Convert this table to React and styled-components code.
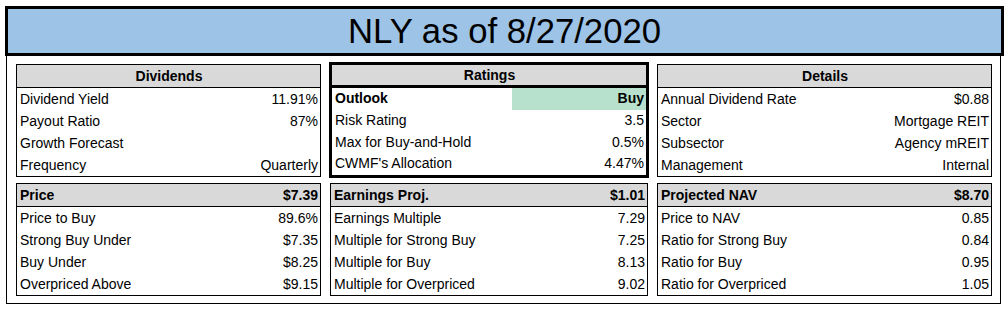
import React from 'react'
import styled, { createGlobalStyle } from 'styled-components'

const GlobalStyle = createGlobalStyle`
  body {
    margin: 0;
    background: #fff;
    font-family: "Liberation Sans", Arial, sans-serif;
    color: #000;
  }
`

const Page = styled.div`
  padding: 6px 0 0 5px;
  width: 999px;
`

const TitleBar = styled.div`
  box-sizing: border-box;
  height: 50px;
  border: 3px solid #000;
  background: #9dc3e6;
  font-size: 34.7px;
  line-height: 44px;
  text-align: center;
`

const Frame = styled.div`
  box-sizing: border-box;
  margin-left: 1px;
  width: 995px;
  border: 1px solid #000;
  border-top: none;
  padding: 8px 8px 7px 9px;
  display: grid;
  grid-template-columns: 305px 318px 335px;
  column-gap: 9px;
  row-gap: 6px;
  align-items: start;
`

const Box = styled.div`
  border: ${p => (p.$thick ? '3px' : '1px')} solid #000;
  margin: ${p => (p.$thick ? '-2px -1px -1px -1px' : '0')};
  font-size: 14px;
`

const Header = styled.div`
  display: flex;
  justify-content: ${p => (p.$center ? 'center' : 'space-between')};
  align-items: center;
  height: ${p => (p.$thick ? '20px' : '22px')};
  padding: 0 2px 0 3px;
  background: #d9d9d9;
  border-bottom: ${p => (p.$thick ? '3px' : '1px')} solid #000;
  font-weight: bold;
`

const Row = styled.div`
  display: flex;
  justify-content: space-between;
  height: ${p => p.$h || 22}px;
  line-height: ${p => p.$h || 22}px;
  font-weight: ${p => (p.$bold ? 'bold' : 'normal')};
`

const Label = styled.span`
  padding-left: 3px;
  white-space: nowrap;
`

const Value = styled.span`
  box-sizing: border-box;
  width: ${p => (p.$w ? `${p.$w}px` : 'auto')};
  padding-right: 2px;
  text-align: right;
  white-space: nowrap;
  background: ${p => p.$fill || 'transparent'};
`

const top = [
  {
    title: 'Dividends',
    rows: [
      ['Dividend Yield', '11.91%'],
      ['Payout Ratio', '87%'],
      ['Growth Forecast', ''],
      ['Frequency', 'Quarterly'],
    ],
  },
  {
    title: 'Ratings',
    thick: true,
    rows: [
      ['Outlook', 'Buy', true],
      ['Risk Rating', '3.5'],
      ['Max for Buy-and-Hold', '0.5%'],
      ["CWMF's Allocation", '4.47%'],
    ],
  },
  {
    title: 'Details',
    rows: [
      ['Annual Dividend Rate', '$0.88'],
      ['Sector', 'Mortgage REIT'],
      ['Subsector', 'Agency mREIT'],
      ['Management', 'Internal'],
    ],
  },
]

const bottom = [
  {
    title: 'Price',
    value: '$7.39',
    rows: [
      ['Price to Buy', '89.6%'],
      ['Strong Buy Under', '$7.35'],
      ['Buy Under', '$8.25'],
      ['Overpriced Above', '$9.15'],
    ],
  },
  {
    title: 'Earnings Proj.',
    value: '$1.01',
    rows: [
      ['Earnings Multiple', '7.29'],
      ['Multiple for Strong Buy', '7.25'],
      ['Multiple for Buy', '8.13'],
      ['Multiple for Overpriced', '9.02'],
    ],
  },
  {
    title: 'Projected NAV',
    value: '$8.70',
    rows: [
      ['Price to NAV', '0.85'],
      ['Ratio for Strong Buy', '0.84'],
      ['Ratio for Buy', '0.95'],
      ['Ratio for Overpriced', '1.05'],
    ],
  },
]

export default function App() {
  return (
    <Page>
      <GlobalStyle />
      <TitleBar>NLY as of 8/27/2020</TitleBar>
      <Frame>
        {top.map(box => (
          <Box key={box.title} $thick={box.thick}>
            <Header $center $thick={box.thick}>{box.title}</Header>
            {box.rows.map(([label, value, hi]) => (
              <Row key={label} $bold={hi} $h={box.thick ? 21.75 : 22}>
                <Label>{label}</Label>
                <Value $w={hi ? 134 : null} $fill={hi ? '#b7e1cd' : null}>{value}</Value>
              </Row>
            ))}
          </Box>
        ))}
        {bottom.map(box => (
          <Box key={box.title}>
            <Header>
              <span>{box.title}</span>
              <span>{box.value}</span>
            </Header>
            {box.rows.map(([label, value]) => (
              <Row key={label}>
                <Label>{label}</Label>
                <Value>{value}</Value>
              </Row>
            ))}
          </Box>
        ))}
      </Frame>
    </Page>
  )
}
